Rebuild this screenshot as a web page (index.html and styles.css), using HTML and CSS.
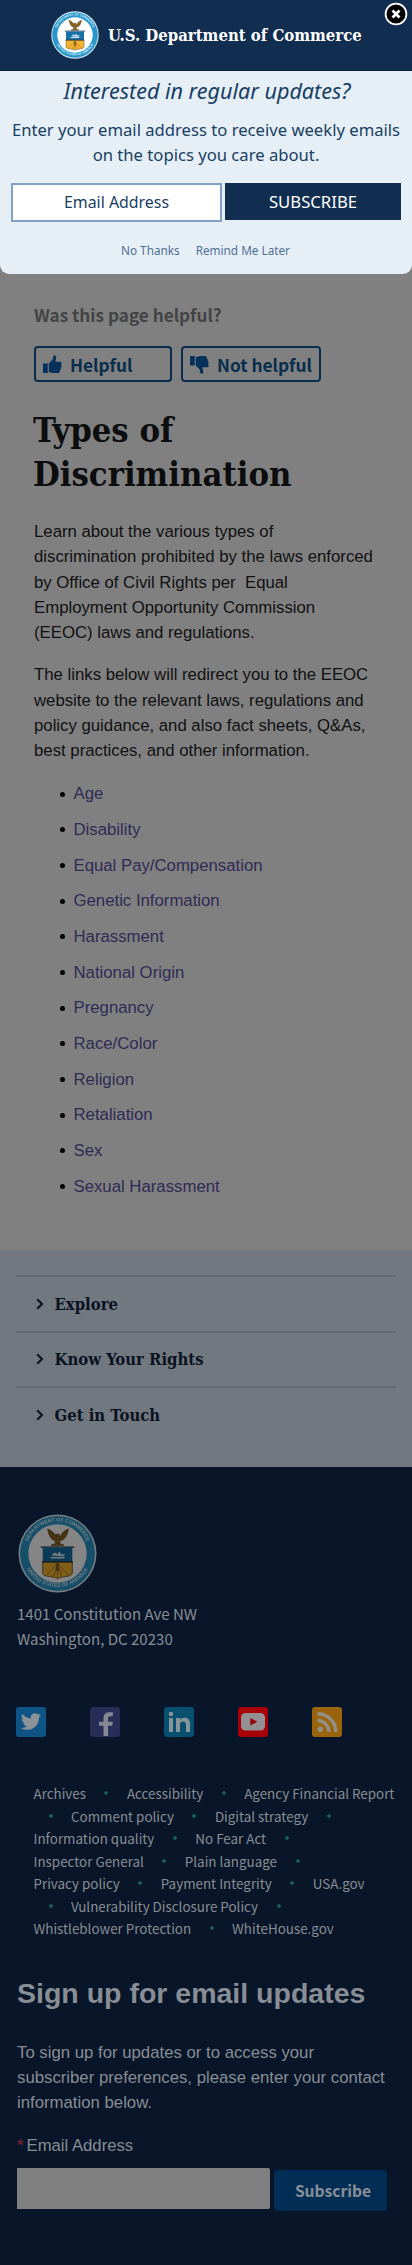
FILE: index.html
```html
<!DOCTYPE html>
<html lang="en">
<head>
<meta charset="utf-8">
<meta name="viewport" content="width=device-width, initial-scale=1">
<title>Types of Discrimination | U.S. Department of Commerce</title>
<link rel="stylesheet" href="styles.css">
</head>
<body>
<svg class="defs" width="0" height="0" aria-hidden="true">
  <symbol id="seal" viewBox="0 0 80 80">
    <circle cx="40" cy="40" r="39.5" fill="#e8f5fb"/>
    <circle cx="40" cy="40" r="38" fill="#2997cb"/>
    <circle cx="40" cy="40" r="29.5" fill="#fff"/>
    <path id="arc-top" d="M8.2 43a32 32 0 1 1 63.6 0" fill="none"/>
    <path id="arc-bottom" d="M5.5 46a35.3 35.3 0 0 0 69 0" fill="none"/>
    <text class="seal-text"><textPath href="#arc-top" startOffset="50%" text-anchor="middle">DEPARTMENT OF COMMERCE</textPath></text>
    <text class="seal-text"><textPath href="#arc-bottom" startOffset="50%" text-anchor="middle">UNITED STATES OF AMERICA</textPath></text>
    <path d="M30 15c1 7 4 12 8 12l-1 4h-3v1h12v-1h-3l-1-4c5 0 8-5 9-12-4 2-7 4-8 8l-2-3-3 1 1 2c-2-4-5-6-9-8z" fill="#8a6420" stroke="#4e3a18" stroke-width=".6"/>
    <path d="M23 33.5h34" stroke="#26313b" stroke-width="1.4"/>
    <path d="M25 34h30v14.500h-30z" fill="#1872a9"/>
    <path d="M25 48.500h30v11c0 3-4 3.500-8 4-3 .3-5 1-7 2-2-1-4-1.700-7-2-4-.5-8-1-8-4z" fill="#f2b632" stroke="#594b2b" stroke-width=".8"/>
    <path d="M24.500 48.500h31" stroke="#26313b" stroke-width="1.200"/>
    <path d="M32 43.500h16l-2 1.500h-12zM34 42l3-3 3 1.500 2-2.500 2 3 4-.5-2 2.500z" fill="#d9eaf4"/>
    <path d="M40 50v14M36 63l4-13 4 13M29 62l11-12 11 12" fill="none" stroke="#a86b22" stroke-width=".9"/>
    <path d="M38.800 50h2.400v8h-2.400z" fill="#75541f"/>
  </symbol>
</svg>

<section class="modal">
  <header class="modal-head">
    <svg class="seal-small"><use href="#seal"/></svg>
    <span class="brand">U.S. Department of Commerce</span>
    <button class="close" aria-label="Close"><svg viewBox="0 0 24 24"><circle cx="12" cy="12" r="10.400" fill="#000" stroke="#fff" stroke-width="1.800"/><path d="M8.500 8.500l7 7M15.500 8.500l-7 7" stroke="#fff" stroke-width="2.800"/></svg></button>
  </header>
  <h2 class="modal-title">Interested in regular updates?</h2>
  <p class="modal-text">Enter your email address to receive weekly emails<br>on the topics you care about.</p>
  <div class="modal-form">
    <div class="modal-input">Email Address</div>
    <div class="modal-button">SUBSCRIBE</div>
  </div>
  <div class="modal-links"><a class="no-thanks">No Thanks</a><a class="later">Remind Me Later</a></div>
</section>

<main class="content">
  <p class="question">Was this page helpful?</p>
  <div class="votes">
    <div class="vote vote-up"><svg viewBox="0 0 20 20"><path d="M0 9h5v10H0zM6 9l4-4 1-4c0-1.500 3-1 3 1.500L13 7h5c2 0 2.300 2.500.9 3.300 1.200.9.800 2.700-.4 3 .8 1 .2 2.500-.8 2.700.5 1.500-.5 3-2 3H11c-2 0-3-1.200-5-1.200z"/></svg><span>Helpful</span></div>
    <div class="vote vote-down"><svg viewBox="0 0 20 20"><path d="M0 1h5v10H0zM6 11l4 4 1 4c0 1.500 3 1 3-1.500L13 13h5c2 0 2.300-2.500.9-3.300 1.200-.9.800-2.700-.4-3 .8-1 .2-2.500-.8-2.700.5-1.500-.5-3-2-3H11C9 1 8 2.200 6 2.200z"/></svg><span>Not helpful</span></div>
  </div>
  <h1 class="title">Types of<br>Discrimination</h1>
  <p class="para">Learn about the various types of<br>discrimination prohibited by the laws enforced<br>by Office of Civil Rights per&nbsp; Equal<br>Employment Opportunity Commission<br>(EEOC) laws and regulations.</p>
  <p class="para">The links below will redirect you to the EEOC<br>website to the relevant laws, regulations and<br>policy guidance, and also fact sheets, Q&amp;As,<br>best practices, and other information.</p>
  <ul class="topics">
    <li><a>Age</a></li><li><a>Disability</a></li><li><a>Equal Pay/Compensation</a></li><li><a>Genetic Information</a></li>
    <li><a>Harassment</a></li><li><a>National Origin</a></li><li><a>Pregnancy</a></li><li><a>Race/Color</a></li>
    <li><a>Religion</a></li><li><a>Retaliation</a></li><li><a>Sex</a></li><li><a>Sexual Harassment</a></li>
  </ul>
</main>

<section class="menu">
  <div class="menu-item"><svg viewBox="0 0 8 12"><path d="M1.200 1.200L6 6l-4.800 4.800"/></svg><span>Explore</span></div>
  <div class="menu-item"><svg viewBox="0 0 8 12"><path d="M1.200 1.200L6 6l-4.800 4.800"/></svg><span>Know Your Rights</span></div>
  <div class="menu-item"><svg viewBox="0 0 8 12"><path d="M1.200 1.200L6 6l-4.800 4.800"/></svg><span>Get in Touch</span></div>
</section>

<footer class="footer">
  <svg class="seal-large"><use href="#seal"/></svg>
  <address class="address">1401 Constitution Ave NW<br>Washington, DC 20230</address>
  <div class="social">
    <svg viewBox="0 0 30 30"><rect width="30" height="30" rx="3" fill="#0e5487"/><path d="M25 8.200c-.7.300-1.500.6-2.400.7.900-.5 1.500-1.300 1.800-2.300-.8.500-1.700.8-2.600 1a4.100 4.100 0 0 0-7 3.800c-3.400-.2-6.400-1.800-8.500-4.300-1.100 1.900-.6 4.300 1.300 5.500-.7 0-1.300-.2-1.900-.5 0 2 1.400 3.700 3.300 4.100-.6.200-1.200.2-1.900.1.500 1.600 2 2.800 3.900 2.900A8.300 8.300 0 0 1 5 20.900c8.300 5.200 18.100-.4 18-10.600.8-.6 1.500-1.300 2-2.100z" fill="#8b9298"/></svg>
    <svg viewBox="0 0 30 30"><rect width="30" height="30" rx="3" fill="#272d56"/><path d="M13.500 29V18.800H9v-4h4.500v-3.300c0-4.300 2.200-6.300 6-6.300h3.300v4h-2.400c-1.800 0-2.300.8-2.300 2.300v3.300h4.700l-.6 4h-4.100V29z" fill="#858994"/></svg>
    <svg viewBox="0 0 30 30"><rect width="30" height="30" rx="3" fill="#07506f"/><path d="M5 11h4v14H5zM12 11h4v2c2-3.500 10-3.300 10 3.500V25h-4v-7.500c0-4-6-4-6 0V25h-4z" fill="#87949a"/><circle cx="7" cy="7" r="2.300" fill="#87949a"/></svg>
    <svg viewBox="0 0 30 30"><rect width="30" height="30" rx="3" fill="#a80008"/><rect x="3" y="6" width="24" height="17.500" rx="4.500" fill="#929092"/><path d="M12.300 11l7 3.800-7 3.800z" fill="#950008"/></svg>
    <svg viewBox="0 0 30 30"><rect width="30" height="30" rx="3" fill="#9a640c"/><circle cx="8.300" cy="22.300" r="2.800" fill="#929086"/><path d="M5.500 13.500A11.500 11.500 0 0 1 17 25M5.500 6.700A18.300 18.300 0 0 1 23.800 25" fill="none" stroke="#929086" stroke-width="3.400"/></svg>
  </div>
  <nav class="links">
    <div><a>Archives</a><i></i><a>Accessibility</a><i></i><a>Agency Financial Report</a></div>
    <div><i class="lead"></i><a>Comment policy</a><i></i><a>Digital strategy</a><i></i></div>
    <div><a>Information quality</a><i></i><a>No Fear Act</a><i></i></div>
    <div><a>Inspector General</a><i></i><a>Plain language</a><i></i></div>
    <div><a>Privacy policy</a><i></i><a>Payment Integrity</a><i></i><a>USA.gov</a></div>
    <div><i class="lead"></i><a>Vulnerability Disclosure Policy</a><i></i></div>
    <div><a>Whistleblower Protection</a><i></i><a>WhiteHouse.gov</a></div>
  </nav>
  <h2 class="signup-title">Sign up for email updates</h2>
  <p class="signup-text">To sign up for updates or to access your<br>subscriber preferences, please enter your contact<br>information below.</p>
  <div class="label"><span>*</span>Email Address</div>
  <div class="signup-form"><div class="signup-input"></div><div class="signup-button">Subscribe</div></div>
</footer>
</body>
</html>
```
FILE: styles.css
```css
* { box-sizing: border-box; }
body { margin: 0; width: 412px; background: #808080; color: #101112; font: 16px "Liberation Sans", Arial, sans-serif; white-space: nowrap; overflow-x: hidden; }
h1, h2, p, ul { margin: 0; padding: 0; }
svg { display: block; flex: none; }
.defs { display: none; }
.seal-text { font: bold 5.200px "Liberation Sans", sans-serif; fill: #d5edf7; }

.modal { height: 274px; background: #e7eff6; border-radius: 0 0 9px 9px; color: #173e63; font-family: "Noto Sans", sans-serif; text-align: center; }
.modal-head { position: relative; display: flex; align-items: center; height: 71px; padding-left: 51px; background: #112e51; border-bottom: 1px solid #0c213b; }
.seal-small { width: 48px; height: 48px; }
.brand { margin-left: 9px; color: #fff; font: bold 16.600px "DejaVu Serif Condensed", "DejaVu Serif", serif; }
.close { position: absolute; top: 2px; right: 4px; width: 24px; height: 24px; padding: 0; border: 0; background: none; }
.modal-title { padding: 5px 0 0 2px; font-size: 21.550px; font-style: italic; font-weight: 400; line-height: 30px; }
.modal-text { margin-top: 11px; font-size: 16.650px; line-height: 25px; }
.modal-form { display: flex; gap: 3px; margin-top: 16px; padding: 0 11px; }
.modal-input { width: 211px; height: 39px; border: 2px solid #829fc4; background: #fff; font-size: 15.900px; line-height: 35px; }
.modal-button { width: 176px; height: 37px; background: #112e51; color: #fff; font-size: 16.700px; line-height: 37px; }
.modal-links { display: flex; gap: 16px; margin-top: 19px; padding-left: 121px; color: #4d7096; font-size: 11.750px; line-height: 18px; }

.content { height: 976px; padding: 29px 34px 0; }
.question, .vote, .address, .links, .signup-button { font-family: "Noto Sans CJK SC", sans-serif; }
.question { color: #434445; font-size: 17.200px; font-weight: 700; line-height: 24px; }
.votes { display: flex; gap: 9px; margin-top: 19px; }
.vote { display: flex; align-items: center; gap: 8px; height: 36px; padding-left: 7px; border: 2px solid #092d4d; border-radius: 4px; color: #092d4d; font-size: 17.300px; font-weight: 700; }
.vote svg { width: 19px; height: 19px; fill: #06315a; }
.vote-up { width: 138px; }
.vote-down { width: 140px; }
.title { margin: 26px 0 0 -1px; font: bold 34.300px/44px "DejaVu Serif Condensed", "DejaVu Serif", serif; color: #0c0d0e; }
.para { margin-top: 17px; font-size: 16.750px; line-height: 25.250px; }
.title + .para { margin-top: 23px; }
.topics { margin-top: 13px; list-style: none; font-size: 16.750px; line-height: 35.700px; }
.topics li { display: flex; align-items: center; height: 35.700px; padding-left: 26px; }
.topics li::before { content: ""; width: 5px; height: 5px; margin-right: 8.500px; border-radius: 50%; background: #000; }
.topics a { color: #2f2b55; }

.menu { height: 217px; padding: 25px 16px 0; background: #727880; }
.menu-item { display: flex; align-items: center; gap: 10.500px; height: 55.600px; padding-left: 20px; border-top: 2px solid #626973; color: #091220; font: bold 16.550px "DejaVu Serif Condensed", "DejaVu Serif", serif; }
.menu-item svg { width: 8px; height: 12px; fill: none; stroke: #091220; stroke-width: 2; }

.footer { height: 798px; padding: 47px 16px 0; background: #091528; color: #888e95; }
.seal-large { width: 79px; height: 79px; margin-left: 1.500px; filter: brightness(.52); }
.address { margin-top: 8px; padding-left: 1px; font-size: 15.050px; font-style: normal; line-height: 25px; }
.social { display: flex; gap: 44px; margin-top: 56px; }
.social svg { width: 30px; height: 30px; }
.links { margin-top: 45px; padding-left: 17.500px; font-size: 13.400px; line-height: 22.500px; }
.links div { display: flex; align-items: center; height: 22.500px; }
.links i { width: 41px; height: 4px; background: radial-gradient(circle, #17605c 1.500px, transparent 2px) center / 4px 4px no-repeat; }
.links .lead { width: 37.500px; background-position: 15px 0; }
.signup-title { margin-top: 36px; padding-left: 1px; font-size: 28.500px; line-height: 34px; }
.signup-text { margin-top: 30px; padding-left: 1px; font-size: 16.750px; line-height: 25px; }
.label { margin-top: 18px; padding-left: 1px; font-size: 16.700px; line-height: 25px; }
.label span { display: inline-block; width: 9.500px; color: #6b2034; font-weight: 700; }
.signup-form { display: flex; gap: 4px; margin-top: 10px; padding-left: 1px; }
.signup-input { width: 253px; height: 41px; border-radius: 0 2px 2px 0; background: #808080; }
.signup-button { width: 113px; height: 41px; margin-top: 2px; border-radius: 4px; background: #022e55; font-size: 15.600px; font-weight: 700; line-height: 41px; text-align: center; padding-left: 5px; }
```
